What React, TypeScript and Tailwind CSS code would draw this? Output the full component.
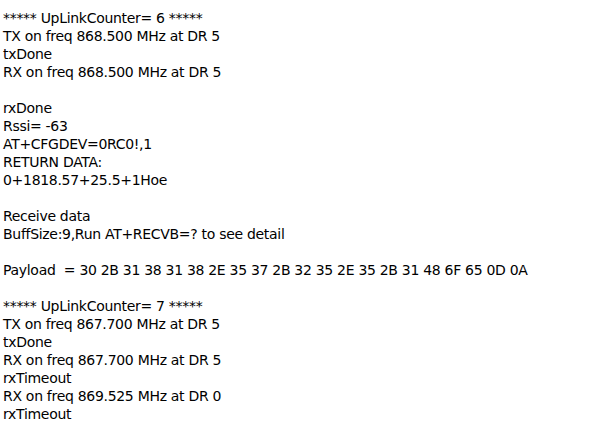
import React from 'react';

const lines = [
  '***** UpLinkCounter= 6 *****',
  'TX on freq 868.500 MHz at DR 5',
  'txDone',
  'RX on freq 868.500 MHz at DR 5',
  '',
  'rxDone',
  'Rssi= -63',
  'AT+CFGDEV=0RC0!,1',
  'RETURN DATA:',
  '0+1818.57+25.5+1Hoe',
  '',
  'Receive data',
  'BuffSize:9,Run AT+RECVB=? to see detail',
  '',
  'Payload  = 30 2B 31 38 31 38 2E 35 37 2B 32 35 2E 35 2B 31 48 6F 65 0D 0A',
  '',
  '***** UpLinkCounter= 7 *****',
  'TX on freq 867.700 MHz at DR 5',
  'txDone',
  'RX on freq 867.700 MHz at DR 5',
  'rxTimeout',
  'RX on freq 869.525 MHz at DR 0',
  'rxTimeout',
];

const App = () => {
  return (
    <div className="w-[593px] h-[437px] bg-white overflow-hidden pl-[3px] pt-[9px] text-black text-[14px] leading-[18px] tracking-[-0.3px] font-['DejaVu_Sans',sans-serif]">
      {lines.map((line, i) => (
        <div key={i} className="h-[18px] whitespace-pre">
          {line}
        </div>
      ))}
    </div>
  );
};

export default App;
